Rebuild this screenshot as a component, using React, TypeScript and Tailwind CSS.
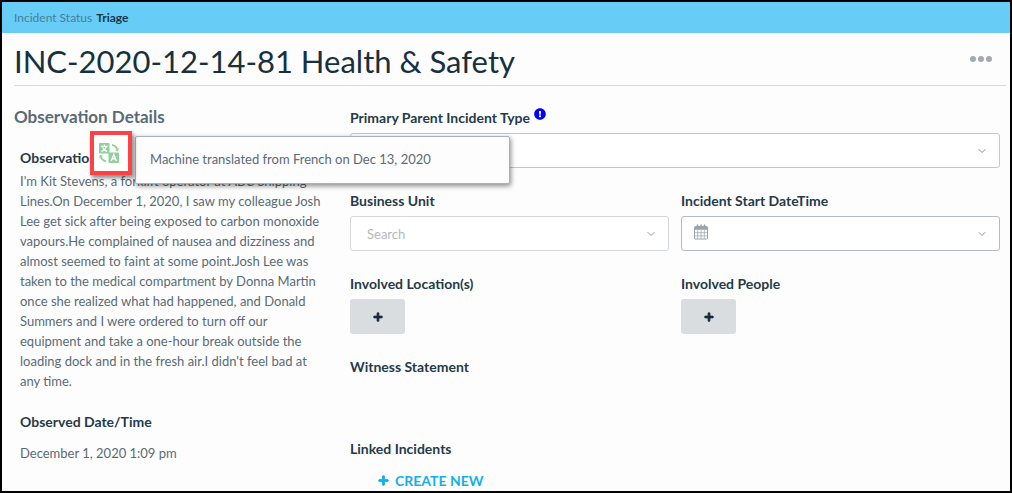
import React, { useState } from "react";
import { FaExclamationCircle, FaPlus } from "react-icons/fa";
import { FiChevronDown } from "react-icons/fi";

const observation =
  "I'm Kit Stevens, a forklift operator at ABC Shipping Lines.On December 1, 2020, I saw my colleague Josh Lee get sick after being exposed to carbon monoxide vapours.He complained of nausea and dizziness and almost seemed to faint at some point.Josh Lee was taken to the medical compartment by Donna Martin once she realized what had happened, and Donald Summers and I were ordered to turn off our equipment and take a one-hour break outside the loading dock and in the fresh air.I didn't feel bad at any time.";

const TranslateIcon = () => (
  <svg viewBox="0 0 20 20" className="w-5 h-5" fill="none" stroke="#8fd19a" aria-hidden="true">
    <rect x="0" y="0" width="10.5" height="10.5" rx="1" fill="#8fd19a" stroke="none" />
    <rect x="9.5" y="9.5" width="10.5" height="10.5" rx="1" fill="#8fd19a" stroke="none" />
    <path d="M5.3 1.6v1.6M1.8 3.4h7M3.2 3.600c.8 2.200 2.600 4 5 5M7.500 3.600c-.8 2.200-2.600 4-5 5" stroke="#fff" strokeWidth="1.2" />
    <path d="M12.200 18l2.600-6.600L17.400 18M13 15.800h3.600" stroke="#fff" strokeWidth="1.4" />
    <path d="M13 1.800c2.600.4 4.600 2.200 5.400 5.200M7 18.200c-2.600-.4-4.600-2.200-5.400-5.200" strokeWidth="1.7" />
    <path d="M16.600 6.600l2 .8.600-2.200M3.400 13.400l-2-.8-.6 2.200" strokeWidth="1.2" />
  </svg>
);

const CalendarIcon = () => (
  <svg
    viewBox="0 0 16 16"
    className="pointer-events-none absolute left-3 top-2 h-4 w-4"
    fill="none"
    stroke="#9aa2aa"
    aria-hidden="true"
  >
    <rect x="1.5" y="2.5" width="13" height="12.500" rx="1" />
    <path d="M1.500 3.500h13M1.500 5h13" strokeWidth="1.500" />
    <path d="M4.700 5.500V15M8 5.500V15M11.300 5.500V15M2 8.700h12M2 11.900h12" strokeWidth=".7" />
    <path d="M4.500 1v3M8 1v2M11.500 1v3" strokeWidth="1.600" strokeLinecap="round" />
  </svg>
);

const AddButton = ({ id }: { id: string }) => (
  <button
    id={id}
    type="button"
    aria-label="Add"
    className="mt-1.5 flex h-[35px] w-[55px] items-center justify-center rounded-[3px] bg-[#d9dde0] text-[#142d3e] hover:bg-gray-300"
  >
    <FaPlus className="text-[10px]" strokeWidth={40} />
  </button>
);

const Label = ({ htmlFor, children }: { htmlFor?: string; children: React.ReactNode }) => (
  <label htmlFor={htmlFor} className="flex h-5 items-center text-[14px] font-bold text-[#253a49]">
    {children}
  </label>
);

const App = () => {
  const [unit, setUnit] = useState("");

  return (
    <div className="min-h-screen border-2 border-black bg-[#fdfdfd] font-['Lato',sans-serif] text-[13px] text-[#5a6a76]">
      <div className="flex h-[31px] items-center gap-1 bg-[#67cdf6] px-3 text-[12px]">
        <span className="text-[#467e9a]">Incident Status</span>
        <span className="font-bold text-[#17364a]">Triage</span>
      </div>

      <header className="ml-3 mr-1 flex h-[53px] items-center justify-between border-b border-[#d9dcde] pb-px">
        <h1 className="pt-1.5 text-[31px] leading-none text-[#17303f]">INC-2020-12-14-81 Health &amp; Safety</h1>
        <button type="button" aria-label="More actions" className="mr-3.5 flex gap-0.5">
          <span className="h-1.5 w-1.5 rounded-full bg-[#a3aab2]"></span>
          <span className="h-1.5 w-1.5 rounded-full bg-[#a3aab2]"></span>
          <span className="h-1.5 w-1.5 rounded-full bg-[#a3aab2]"></span>
        </button>
      </header>

      <main className="flex pl-3 pr-2.5 pt-[21px]">
        <section className="w-[336px] shrink-0">
          <h2 className="flex h-5 items-center text-[17px] font-bold">Observation Details</h2>

          <div className="pl-1.5 pr-6 pt-5">
            <div className="relative">
              <h3 className="flex h-5 items-center text-[14px] font-bold text-[#253a49]">Observation</h3>
              <button
                type="button"
                aria-label="Translation details"
                aria-describedby="translated"
                className="absolute -top-4 left-[70px] z-20 flex h-[44px] w-[42px] items-center justify-center border-4 border-[#fb4345] bg-white pr-1 shadow-[2px_3px_4px_rgba(0,0,0,0.45)]"
              >
                <TranslateIcon />
              </button>
              <div
                id="translated"
                role="tooltip"
                className="absolute -top-[11px] left-[115px] z-10 flex h-12 w-[375px] items-center rounded-[2px] border border-[#a9b2ba] bg-[#fdfdfd] px-3.5 shadow-[1px_2px_5px_rgba(0,0,0,0.45)]"
              >
                Machine translated from French on Dec 13, 2020
              </div>
            </div>
            <p className="pt-1 leading-5">{observation}</p>

            <h3 className="mt-5 flex h-5 items-center text-[14px] font-bold text-[#253a49]">Observed Date/Time</h3>
            <p className="mt-3 leading-5">December 1, 2020 1:09 pm</p>
          </div>
        </section>

        <section className="grid flex-1 grid-cols-2 content-start gap-x-3 gap-y-[22px]">
          <div className="col-span-2">
            <Label htmlFor="type">
              Primary Parent Incident Type
              <FaExclamationCircle className="mb-1.5 ml-1 text-[12px] text-[#0000ff]" />
            </Label>
            <div className="relative mt-1.5">
              <select id="type" className="h-[35px] w-full appearance-none rounded-[3px] border border-[#c3c8cb] bg-white px-4">
                <option></option>
              </select>
              <FiChevronDown className="pointer-events-none absolute right-3 top-3 text-[12px] text-[#7f8a93]" />
            </div>
          </div>

          <div>
            <Label htmlFor="unit">Business Unit</Label>
            <div className="relative mt-1.5">
              <input
                id="unit"
                value={unit}
                onChange={(e) => setUnit(e.target.value)}
                placeholder="Search"
                className="h-[35px] w-full rounded-[3px] border border-[#d5d8da] bg-white px-4 placeholder:text-[#b3b9be]"
              />
              <FiChevronDown className="pointer-events-none absolute right-3 top-3 text-[12px] text-[#8f989f]" />
            </div>
          </div>

          <div>
            <Label htmlFor="start">Incident Start DateTime</Label>
            <div className="relative mt-1.5">
              <input id="start" className="h-[35px] w-full rounded-[3px] border border-[#b4bbc0] bg-white pl-9 pr-8" />
              <CalendarIcon />
              <FiChevronDown className="pointer-events-none absolute right-3 top-3 text-[12px] text-[#8f989f]" />
            </div>
          </div>

          <div>
            <Label htmlFor="locations">Involved Location(s)</Label>
            <AddButton id="locations" />
          </div>

          <div>
            <Label htmlFor="people">Involved People</Label>
            <AddButton id="people" />
          </div>

          <div className="col-span-2 h-[60px]">
            <h3 className="flex h-5 items-center text-[14px] font-bold text-[#253a49]">Witness Statement</h3>
          </div>

          <div className="col-span-2">
            <h3 className="flex h-5 items-center text-[14px] font-bold text-[#253a49]">Linked Incidents</h3>
            <button type="button" className="ml-7 mt-3 flex h-5 items-center gap-1.5 text-[14px] font-bold text-[#15aeec]">
              <FaPlus className="text-[11px]" strokeWidth={40} />
              CREATE NEW
            </button>
          </div>
        </section>
      </main>
    </div>
  );
};

export default App;
